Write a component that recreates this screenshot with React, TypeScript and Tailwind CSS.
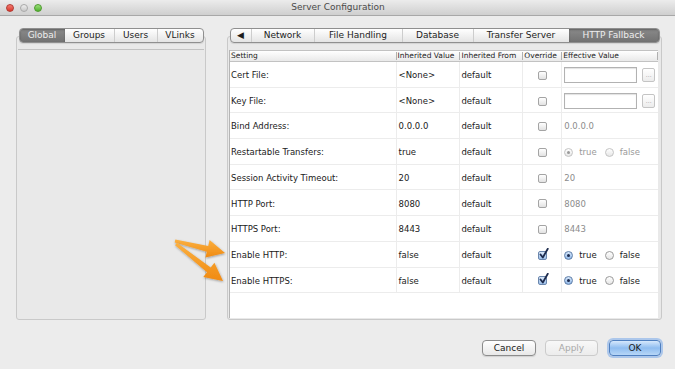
import React from 'react';

type Tab = { label: string; w: string; selected?: boolean };

const leftTabs: Tab[] = [
  { label: 'Global', w: 'w-[45px]', selected: true },
  { label: 'Groups', w: 'w-[49px]' },
  { label: 'Users', w: 'w-[43px]' },
  { label: 'VLinks', w: 'w-[46px]' },
];

const rightTabs: Tab[] = [
  { label: '◀', w: 'w-[20px]' },
  { label: 'Network', w: 'w-[63px]' },
  { label: 'File Handling', w: 'w-[88px]' },
  { label: 'Database', w: 'w-[71px]' },
  { label: 'Transfer Server', w: 'w-[96px]' },
  { label: 'HTTP Fallback', w: 'w-[90px]', selected: true },
];

type Effective =
  | { kind: 'file' }
  | { kind: 'text'; value: string }
  | { kind: 'radio'; enabled: boolean };

interface Row {
  name: string;
  inherited: string;
  override: boolean;
  effective: Effective;
}

const rows: Row[] = [
  { name: 'Cert File:', inherited: '<None>', override: false, effective: { kind: 'file' } },
  { name: 'Key File:', inherited: '<None>', override: false, effective: { kind: 'file' } },
  { name: 'Bind Address:', inherited: '0.0.0.0', override: false, effective: { kind: 'text', value: '0.0.0.0' } },
  { name: 'Restartable Transfers:', inherited: 'true', override: false, effective: { kind: 'radio', enabled: false } },
  { name: 'Session Activity Timeout:', inherited: '20', override: false, effective: { kind: 'text', value: '20' } },
  { name: 'HTTP Port:', inherited: '8080', override: false, effective: { kind: 'text', value: '8080' } },
  { name: 'HTTPS Port:', inherited: '8443', override: false, effective: { kind: 'text', value: '8443' } },
  { name: 'Enable HTTP:', inherited: 'false', override: true, effective: { kind: 'radio', enabled: true } },
  { name: 'Enable HTTPS:', inherited: 'false', override: true, effective: { kind: 'radio', enabled: true } },
];

const TabStrip: React.FC<{ tabs: Tab[] }> = ({ tabs }) => (
  <div className="relative z-10 flex h-[15px] self-center overflow-hidden rounded-[4px] border border-[#8f8f8f] bg-linear-to-b from-white to-[#e4e4e4] shadow-[0_1px_1px_rgba(0,0,0,0.1)]">
    {tabs.map((t, i) => {
      const prevSelected = i > 0 && tabs[i - 1].selected;
      return (
        <div
          key={t.label}
          className={
            `${t.w} flex shrink-0 items-center justify-center text-[9px] leading-none ` +
            (t.selected
              ? 'bg-linear-to-b from-[#8a8a8a] to-[#727272] text-[#eeeeee] shadow-[inset_0_1px_2px_rgba(0,0,0,0.3)]'
              : 'text-[#1c1c1c] ' + (i > 0 && !prevSelected ? 'border-l border-[#cdcdcd]' : ''))
          }
        >
          {t.label}
        </div>
      );
    })}
  </div>
);

const Checkbox: React.FC<{ checked: boolean }> = ({ checked }) => (
  <div className="relative h-[9px] w-[9px]">
    <div
      className={
        'h-[9px] w-[9px] rounded-[2px] border ' +
        (checked
          ? 'border-[#6a86ad] bg-linear-to-b from-[#dbe8f8] to-[#9dc0ea]'
          : 'border-[#a4a4a4] bg-linear-to-b from-white to-[#e2e2e2]')
      }
    />
    {checked && (
      <svg className="absolute left-[1px] top-[-3px]" width="10" height="11" viewBox="0 0 10 11">
        <path d="M1.5 6.5 L3.8 9.5 L8.8 0.8" fill="none" stroke="#1d2b4d" strokeWidth="1.8" strokeLinecap="round" strokeLinejoin="round" />
      </svg>
    )}
  </div>
);

const Radio: React.FC<{ selected: boolean; enabled: boolean }> = ({ selected, enabled }) => {
  if (selected && enabled) {
    return (
      <div className="flex h-[9px] w-[9px] items-center justify-center rounded-full border border-[#5e7ea8] bg-linear-to-b from-[#d7e7fa] to-[#8fb6e6]">
        <div className="h-[3px] w-[3px] rounded-full bg-[#1d2b4d]" />
      </div>
    );
  }
  return (
    <div
      className={
        'flex h-[9px] w-[9px] items-center justify-center rounded-full border bg-linear-to-b from-white to-[#e6e6e6] ' +
        (enabled ? 'border-[#9a9a9a]' : 'border-[#c4c4c4]')
      }
    >
      {selected && <div className="h-[3px] w-[3px] rounded-full bg-[#9a9a9a]" />}
    </div>
  );
};

const EffectiveCell: React.FC<{ e: Effective }> = ({ e }) => {
  if (e.kind === 'file') {
    return (
      <div className="flex items-center pl-[2px]">
        <div className="h-[16px] w-[73px] border border-[#b2b2b2] bg-white shadow-[inset_0_1px_1px_rgba(0,0,0,0.12)]" />
        <div className="ml-[5px] flex h-[14px] w-[13px] items-end justify-center rounded-[2px] border border-[#c4c4c4] bg-linear-to-b from-white to-[#ececec] pb-[3px] text-[6px] leading-none text-[#9a9a9a]">
          ...
        </div>
      </div>
    );
  }
  if (e.kind === 'text') {
    return <div className="pl-[2px] text-[#8c8c8c]">{e.value}</div>;
  }
  const txt = e.enabled ? 'text-[#1a1a1a]' : 'text-[#9a9a9a]';
  return (
    <div className="flex items-center pl-[2px]">
      <Radio selected enabled={e.enabled} />
      <span className={`ml-[6px] ${txt}`}>true</span>
      <div className="ml-[8px]">
        <Radio selected={false} enabled={e.enabled} />
      </div>
      <span className={`ml-[6px] ${txt}`}>false</span>
    </div>
  );
};

const Arrows: React.FC = () => (
  <svg className="pointer-events-none absolute left-[168px] top-[228px]" width="64" height="62" viewBox="0 0 64 62">
    <defs>
      <linearGradient id="org" x1="0" y1="0" x2="0" y2="1">
        <stop offset="0" stopColor="#fbb040" />
        <stop offset="1" stopColor="#f08a12" />
      </linearGradient>
      <filter id="sh" x="-20%" y="-20%" width="140%" height="140%">
        <feDropShadow dx="0.5" dy="1" stdDeviation="0.8" floodColor="#000" floodOpacity="0.35" />
      </filter>
    </defs>
    <polygon
      filter="url(#sh)"
      fill="url(#org)"
      points="7.35,11.54 40.2,17.88 41.6,12.04 57,25 37.4,29.56 38.8,23.72 6.65,14.46"
    />
    <polygon
      filter="url(#sh)"
      fill="url(#org)"
      points="8.93,14.82 42.71,39.5 46.42,34.79 55,53 35.28,48.93 38.99,44.22 7.07,17.18"
    />
  </svg>
);

const cols = {
  setting: 'w-[166px]',
  inh: 'w-[64px]',
  from: 'w-[63px]',
  ovr: 'w-[39px]',
  eff: 'w-[97px]',
};

const App: React.FC = () => {
  return (
    <div className="relative flex h-[369px] w-[675px] flex-col overflow-hidden bg-[#ececec] font-['DejaVu_Sans',sans-serif] text-[#1a1a1a]">
      {/* title bar */}
      <div className="relative flex h-[16px] shrink-0 items-center border-b border-[#a8a8a8] bg-linear-to-b from-[#ececec] to-[#cfcfcf]">
        <div className="flex items-center gap-[6px] pl-[6px]">
          <div className="h-[8px] w-[8px] rounded-full border border-[#b23a32] bg-linear-to-b from-[#f37a70] to-[#d8342a]" />
          <div className="h-[8px] w-[8px] rounded-full border border-[#a9a9a9] bg-linear-to-b from-[#eeeeee] to-[#c8c8c8]" />
          <div className="h-[8px] w-[8px] rounded-full border border-[#4e9a2e] bg-linear-to-b from-[#9be07a] to-[#4fb12b]" />
        </div>
        <div className="flex-1 pr-[41px] text-center text-[9px] leading-none text-[#4a4a4a]">Server Configuration</div>
      </div>

      {/* panels */}
      <div className="box-content flex h-[292px] shrink-0 gap-[21px] pl-[16px] pr-[13px] pt-[12px]">
        {/* left */}
        <div className="flex w-[190px] flex-col">
          <TabStrip tabs={leftTabs} />
          <div className="-mt-[7px] flex flex-1 flex-col rounded-[3px] border border-[#c9c9c9] bg-[#e9e9e9]">
            <div className="mx-[1px] mt-[12px] border-t border-[#c2c2c2]" />
          </div>
        </div>

        {/* right */}
        <div className="flex w-[435px] flex-col">
          <TabStrip tabs={rightTabs} />
          <div className="-mt-[7px] flex flex-1 flex-col rounded-[3px] border border-[#c9c9c9] bg-[#e9e9e9] pb-[1px] pl-[1px] pr-[3px] pt-[13px]">
            <div className="flex flex-1 flex-col border-l border-[#b5b5b5] bg-white">
              {/* header */}
              <div className="flex h-[12px] shrink-0 items-center border-b border-t border-[#c2c2c2] bg-linear-to-b from-white to-[#e9e9e9] text-[7.5px] leading-none text-[#222]">
                <div className={`${cols.setting} pl-[1px]`}>Setting</div>
                <div className={`${cols.inh} border-l border-[#b0b0b0] pl-[1px]`}>Inherited Value</div>
                <div className={`${cols.from} border-l border-[#b0b0b0] pl-[1px]`}>Inherited From</div>
                <div className={`${cols.ovr} border-l border-[#b0b0b0] pl-[1px]`}>Override</div>
                <div className={`${cols.eff} border-l border-r border-[#b0b0b0] pl-[1px]`}>Effective Value</div>
              </div>
              {/* body */}
              {rows.map((r) => (
                <div key={r.name} className="flex h-[25.7px] shrink-0 items-stretch border-b border-[#ececec] pt-[2px] text-[8.5px] leading-none">
                  <div className={`${cols.setting} flex items-center pl-[1px]`}>{r.name}</div>
                  <div className={`${cols.inh} -mt-[2px] flex items-center border-l border-[#ececec] pl-[2px] pt-[2px]`}>{r.inherited}</div>
                  <div className={`${cols.from} -mt-[2px] flex items-center border-l border-[#ececec] pl-[1px] pt-[2px]`}>default</div>
                  <div className={`${cols.ovr} -mt-[2px] flex items-center justify-center border-l border-[#ececec] pl-[1px] pt-[2px]`}>
                    <Checkbox checked={r.override} />
                  </div>
                  <div className={`${cols.eff} -mt-[2px] flex items-center border-l border-[#ececec] pt-[2px]`}>
                    <EffectiveCell e={r.effective} />
                  </div>
                </div>
              ))}
              <div className="flex-1" />
            </div>
          </div>
        </div>
      </div>

      {/* buttons */}
      <div className="mt-[20px] flex justify-end pr-[14px] text-[9px] leading-none">
        <div className="flex h-[16px] w-[54px] items-center justify-center rounded-[4px] border border-[#8c8c8c] bg-linear-to-b from-white to-[#e8e8e8] shadow-[0_1px_1px_rgba(0,0,0,0.12)]">
          Cancel
        </div>
        <div className="ml-[9px] flex h-[16px] w-[53px] items-center justify-center rounded-[4px] border border-[#cbcbcb] bg-linear-to-b from-[#f8f8f8] to-[#ececec] text-[#a9a9a9]">
          Apply
        </div>
        <div className="ml-[11px] flex h-[16px] w-[52px] items-center justify-center rounded-[4px] border border-[#4f7fbf] bg-linear-to-b from-[#d6e8fc] via-[#8fbdf0] to-[#b7d6f7] shadow-[0_0_0_2px_rgba(120,170,235,0.55)]">
          OK
        </div>
      </div>

      <Arrows />
    </div>
  );
};

export default App;
